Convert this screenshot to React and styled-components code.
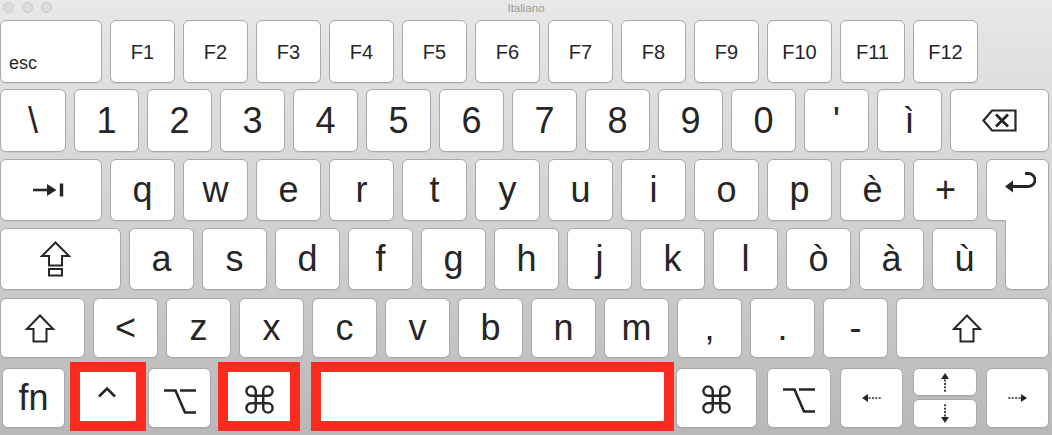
import React from "react";
import styled, { createGlobalStyle } from "styled-components";

const GlobalStyle = createGlobalStyle`
  html, body { margin: 0; padding: 0; }
  body {
    overflow: hidden;
    font-family: "Liberation Sans", Arial, sans-serif;
    color: #262626;
  }
`;

const Window = styled.div`
  width: 1052px;
  height: 435px;
  display: flex;
  flex-direction: column;
  overflow: hidden;
  background: linear-gradient(#e8e8e8 0%, #e2e2e2 12%, #d0d0d0 55%, #b8b8b8 100%);
`;

const TitleBar = styled.div`
  height: 18px;
  display: grid;
  grid-template-columns: 1fr auto 1fr;
  align-items: center;
  padding: 0 3px;
`;

const Lights = styled.div`
  display: flex;
  gap: 8px;
  margin-top: -4px;
`;

const Light = styled.span`
  width: 9px;
  height: 9px;
  border-radius: 50%;
  background: #dcdcdc;
  border: 0.5px solid #c8c8c8;
`;

const Title = styled.div`
  font-size: 11.5px;
  color: #9a9a9a;
  margin-top: -2px;
`;

const Keyboard = styled.div`
  display: flex;
  flex-direction: column;
  padding-top: 1px;
`;

const Row = styled.div`
  display: flex;
  height: ${(p) => p.$h}px;
  margin-top: ${(p) => p.$mt}px;
  gap: ${(p) => p.$gap ?? 8}px;
`;

const Key = styled.div`
  position: relative;
  box-sizing: border-box;
  flex: none;
  width: ${(p) => p.$w ?? 65}px;
  margin-left: ${(p) => p.$ml ?? 0}px;
  display: flex;
  align-items: ${(p) => p.$v ?? "center"};
  justify-content: ${(p) => p.$hz ?? "center"};
  padding: ${(p) => p.$pad ?? "0"};
  background: #fff;
  border: 1px solid #a9a9a9;
  border-radius: 6px;
  box-shadow: 0 1px 0 rgba(0, 0, 0, 0.06);
  font-size: ${(p) => p.$fs ?? 36}px;
  line-height: 1;
  white-space: nowrap;
`;

const MarkedKey = styled(Key)`
  border: 10px solid #fc2b1f;
  border-radius: 0;
  box-shadow: none;
  margin-top: -6px;
  margin-bottom: -3px;
`;

const EnterTop = styled(Key)`
  border-bottom-right-radius: 0;
`;

const EnterBottom = styled(Key)`
  margin-top: -8px;
  border-top: none;
  border-radius: 0 0 6px 6px;
  z-index: 1;
`;

const ArrowStack = styled.div`
  display: flex;
  flex-direction: column;
  gap: 3px;
  width: 64px;
  margin-left: ${(p) => p.$ml}px;
`;

const HalfKey = styled(Key)`
  width: 64px;
  height: ${(p) => p.$hh}px;
`;

const Svg = ({ w, h, vb, children, sw = 2.4 }) => (
  <svg
    width={w}
    height={h}
    viewBox={vb}
    fill="none"
    stroke="#262626"
    strokeWidth={sw}
    strokeLinejoin="miter"
  >
    {children}
  </svg>
);

const TabIcon = () => (
  <Svg w={31} h={14} vb="0 0 31 14" sw={2.6}>
    <path d="M0 7 H18" />
    <path d="M14 1 L23.5 7 L14 13 Z" fill="#262626" stroke="none" />
    <path d="M28.5 0.5 V13.5" strokeWidth={3.4} />
  </Svg>
);

const BackspaceIcon = () => (
  <Svg w={35} h={23} vb="0 0 35 23" sw={2.2}>
    <path d="M1.5 11.5 L10 1.5 H33.5 V21.5 H10 Z" />
    <path d="M14 5.5 L26 17.5 M26 5.5 L14 17.5" strokeWidth={2.8} />
  </Svg>
);

const ReturnIcon = () => (
  <Svg w={31} h={23} vb="0 0 31 23" sw={2.8}>
    <path d="M5 15.5 H23.5 A6.5 6.5 0 0 0 23.5 2.5 H20" />
    <path d="M0 15.5 L8 9.5 L8 21.5 Z" fill="#262626" stroke="none" />
  </Svg>
);

const CapsIcon = () => (
  <Svg w={31} h={36} vb="0 0 31 36" sw={2}>
    <path d="M15.5 1.5 L2 15 H9 V24.5 H22 V15 H29 Z" />
    <rect x="9" y="28" width="13" height="6.5" />
  </Svg>
);

const ShiftIcon = () => (
  <Svg w={30} h={29} vb="0 0 30 29" sw={2}>
    <path d="M15 1.5 L1.8 15 H8.5 V27.5 H21.5 V15 H28.2 Z" />
  </Svg>
);

const CtrlIcon = () => (
  <Svg w={20} h={12} vb="0 0 20 12" sw={2.6}>
    <path d="M2 10.5 L10 2.5 L18 10.5" />
  </Svg>
);

const OptionIcon = () => (
  <Svg w={32} h={25} vb="0 0 32 25" sw={2.6}>
    <path d="M0 1.5 H11.5 L21 23.5 H32 M16 1.5 H32" />
  </Svg>
);

const CmdIcon = () => (
  <Svg w={29} h={29} vb="-1.5 -1.5 31 31" sw={2.6}>
    <path d="M10 10 V5 A5 5 0 1 0 5 10 H23 A5 5 0 1 0 18 5 V23 A5 5 0 1 0 23 18 H5 A5 5 0 1 0 10 23 Z" />
  </Svg>
);

// dotted arrow, drawn pointing left, then turned
const DotArrow = ({ dir }) => {
  const rot = { left: 0, up: 90, right: 180, down: 270 }[dir];
  const vertical = dir === "up" || dir === "down";
  return (
    <svg
      width={vertical ? 10 : 19}
      height={vertical ? 19 : 10}
      viewBox={vertical ? "4.5 -4.5 10 19" : "0 0 19 10"}
    >
      <g transform={`rotate(${rot} 9.5 5)`}>
        <path d="M0 5 L6 1 V9 Z" fill="#262626" />
        <path
          d="M6.5 5 H19"
          stroke="#262626"
          strokeWidth={1.7}
          strokeDasharray="2 1.4"
        />
      </g>
    </svg>
  );
};

const fKeys = ["F1", "F2", "F3", "F4", "F5", "F6", "F7", "F8", "F9", "F10", "F11", "F12"];
const numKeys = ["1", "2", "3", "4", "5", "6", "7", "8", "9", "0", "'", "ì"];
const topKeys = ["q", "w", "e", "r", "t", "y", "u", "i", "o", "p", "è", "+"];
const homeKeys = ["a", "s", "d", "f", "g", "h", "j", "k", "l", "ò", "à", "ù"];
const lowKeys = ["<", "z", "x", "c", "v", "b", "n", "m", ",", ".", "-"];

export default function App() {
  return (
    <Window>
      <GlobalStyle />
      <TitleBar>
        <Lights>
          <Light />
          <Light />
          <Light />
        </Lights>
        <Title>Italiano</Title>
        <span />
      </TitleBar>
      <Keyboard>
        <Row $h={63} $mt={1}>
          <Key $w={102} $fs={18} $v="flex-end" $hz="flex-start" $pad="0 0 10px 8px">
            esc
          </Key>
          {fKeys.map((k) => (
            <Key key={k} $fs={20}>
              {k}
            </Key>
          ))}
        </Row>
        <Row $h={63} $mt={6}>
          <Key $w={66}>\</Key>
          {numKeys.map((k) => (
            <Key key={k}>{k}</Key>
          ))}
          <Key $w={99}>
            <BackspaceIcon />
          </Key>
        </Row>
        <Row $h={62} $mt={7}>
          <Key $w={102} $pad="0 6px 0 0">
            <TabIcon />
          </Key>
          {topKeys.map((k) => (
            <Key key={k}>{k}</Key>
          ))}
          <EnterTop $w={63} $v="flex-start" $pad="11px 0 0 6px">
            <ReturnIcon />
          </EnterTop>
        </Row>
        <Row $h={62} $mt={7}>
          <Key $w={121} $pad="0 11px 0 0">
            <CapsIcon />
          </Key>
          {homeKeys.map((k) => (
            <Key key={k}>{k}</Key>
          ))}
          <EnterBottom $w={44} />
        </Row>
        <Row $h={60} $mt={8}>
          <Key $w={85} $pad="0 6px 0 0">
            <ShiftIcon />
          </Key>
          {lowKeys.map((k) => (
            <Key key={k}>{k}</Key>
          ))}
          <Key $w={153} $pad="0 12px 0 0">
            <ShiftIcon />
          </Key>
        </Row>
        <Row $h={60} $mt={10} $gap={0}>
          <Key $w={63} $ml={2}>fn</Key>
          <MarkedKey $w={76} $ml={5} $v="flex-start" $pad="14px 2px 0 0">
            <CtrlIcon />
          </MarkedKey>
          <Key $w={63} $ml={2} $pad="6px 0 0 0">
            <OptionIcon />
          </Key>
          <MarkedKey $w={82} $ml={7} $pad="6px 0 0 0">
            <CmdIcon />
          </MarkedKey>
          <MarkedKey $w={363} $ml={11} />
          <Key $w={81} $ml={2} $pad="2px 0 0 0">
            <CmdIcon />
          </Key>
          <Key $w={64} $ml={10} $pad="4px 0 0 0">
            <OptionIcon />
          </Key>
          <Key $w={63} $ml={9}>
            <DotArrow dir="left" />
          </Key>
          <ArrowStack $ml={10}>
            <HalfKey $hh={28}>
              <DotArrow dir="up" />
            </HalfKey>
            <HalfKey $hh={29}>
              <DotArrow dir="down" />
            </HalfKey>
          </ArrowStack>
          <Key $w={63} $ml={9}>
            <DotArrow dir="right" />
          </Key>
        </Row>
      </Keyboard>
    </Window>
  );
}
